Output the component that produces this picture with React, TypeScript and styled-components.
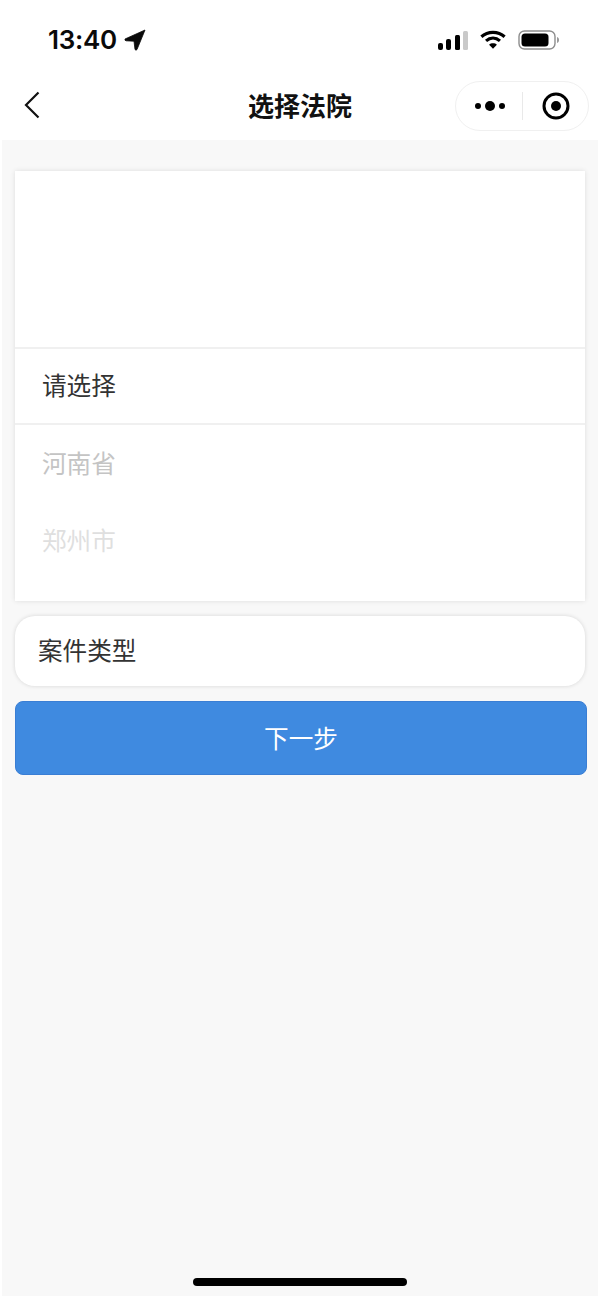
import React from "react";
import styled, { createGlobalStyle } from "styled-components";

const Global = createGlobalStyle`
  html, body { margin: 0; padding: 0; background: #fff; }
  body { font-family: "Noto Sans CJK SC", "Liberation Sans", sans-serif; }
  * { box-sizing: border-box; }
`;

const Page = styled.div`
  width: 600px;
  height: 1298px;
  display: flex;
  flex-direction: column;
  background: #fff;
  overflow: hidden;
`;

const StatusBar = styled.div`
  height: 72px;
  padding: 0 40px 0 48px;
  display: flex;
  align-items: flex-start;
  justify-content: space-between;
`;

const TimeGroup = styled.div`
  display: flex;
  align-items: center;
  gap: 7px;
  height: 30px;
  margin-top: 25px;
`;

const Time = styled.span`
  font-family: Inter, "Liberation Sans", sans-serif;
  font-size: 26px;
  font-weight: 600;
  letter-spacing: -0.3px;
  color: #0a0a0a;
  line-height: 30px;
`;

const StatusIcons = styled.div`
  display: flex;
  align-items: center;
  height: 20px;
  margin-top: 30px;
  gap: 12px;
`;

const NavBar = styled.div`
  height: 68px;
  padding: 0 11px 0 24px;
  display: flex;
  align-items: center;
  justify-content: space-between;
  position: relative;
`;

const NavTitle = styled.h1`
  position: absolute;
  left: 0;
  right: 0;
  top: 15px;
  margin: 0;
  text-align: center;
  font-size: 26px;
  line-height: 36px;
  font-weight: 600;
  color: #111;
`;

const BackButton = styled.div`
  display: flex;
  align-items: center;
  margin-top: -2px;
`;

const Capsule = styled.div`
  width: 134px;
  height: 50px;
  margin-top: -1px;
  border: 1px solid #f0f0f0;
  border-radius: 25px;
  background: #fff;
  display: flex;
  align-items: center;
`;

const CapsuleSide = styled.div`
  flex: 1;
  padding-left: 2px;
  display: flex;
  align-items: center;
  justify-content: center;
`;

const CapsuleDivider = styled.div`
  width: 1px;
  height: 28px;
  background: #e9e9e9;
`;

const Content = styled.main`
  flex: 1;
  margin: 0 2px 2px;
  padding: 31px 13px 0;
  background: #f8f8f8;
  display: flex;
  flex-direction: column;
`;

const PickerCard = styled.section`
  width: 570px;
  height: 430px;
  background: #fff;
  box-shadow: 0 0 5px rgba(0, 0, 0, 0.11);
  display: flex;
  flex-direction: column;
`;

const PickerBlank = styled.div`
  height: 178px;
  border-bottom: 2px solid #f0f0f0;
`;

const PickerRow = styled.div<{ $tone: string; $height: number }>`
  height: ${(p) => p.$height}px;
  padding: 0 0 4px 27px;
  display: flex;
  align-items: center;
  font-size: 24.6px;
  color: ${(p) => p.$tone};
`;

const SelectedRow = styled(PickerRow)`
  border-bottom: 2px solid #f0f0f0;
`;

const TypeField = styled.div`
  width: 570px;
  height: 70px;
  margin-top: 15px;
  padding: 0 0 4px 23px;
  display: flex;
  align-items: center;
  background: #fff;
  border-radius: 20px;
  box-shadow: 0 0 4px rgba(0, 0, 0, 0.14);
  font-size: 24.6px;
  color: #333;
`;

const NextButton = styled.button`
  width: 572px;
  height: 74px;
  margin-top: 15px;
  border: 1px solid #3a7ed4;
  border-radius: 8px;
  background: #3f8ae0;
  color: #fff;
  font-family: inherit;
  font-size: 24.6px;
  padding: 0 0 2px;
`;

const HomeIndicator = styled.div`
  width: 214px;
  height: 8px;
  margin: auto 0 10px 178px;
  background: #000;
  border-radius: 4px;
`;

export default function App() {
  return (
    <Page>
      <Global />
      <StatusBar>
        <TimeGroup>
          <Time>13:40</Time>
          <svg width="22" height="22" viewBox="0 0 22 22">
            <path d="M21 1 L1 10 Q0.5 11.5 2 11.8 L10 12.2 L11 20.5 Q12 21.8 13 20.5 Z" fill="#0a0a0a" stroke="#0a0a0a" strokeWidth="0.8" strokeLinejoin="round" />
          </svg>
        </TimeGroup>
        <StatusIcons>
          <svg width="30" height="19" viewBox="0 0 30 19">
            <rect x="0" y="12" width="5" height="7" rx="2" fill="#000" />
            <rect x="8" y="8" width="5" height="11" rx="2" fill="#000" />
            <rect x="17" y="4" width="5" height="15" rx="1.5" fill="#000" />
            <rect x="25" y="0" width="5" height="19" rx="1.5" fill="#c9c9c9" />
          </svg>
          <svg width="26" height="20" viewBox="0 0 28 20">
            <path d="M1.5 6.5 C8.5 0.2 19.5 0.2 26.5 6.5" fill="none" stroke="#000" strokeWidth="3.4" />
            <path d="M6.5 11 C11 7 17 7 21.5 11" fill="none" stroke="#000" strokeWidth="3.4" />
            <path d="M14 19.5 L9.8 15 C12 13 16 13 18.2 15 Z" fill="#000" />
          </svg>
          <svg width="42" height="20" viewBox="0 0 42 20">
            <rect x="1" y="1" width="36" height="18" rx="5.5" fill="#fff" stroke="#8d8d8d" strokeWidth="1.4" />
            <rect x="3.5" y="3.5" width="27" height="13" rx="3.5" fill="#000" />
            <path d="M39 7 C40.6 7.5 41 8.7 41 10 C41 11.3 40.6 12.5 39 13 Z" fill="#9a9a9a" />
          </svg>
        </StatusIcons>
      </StatusBar>
      <NavBar>
        <BackButton>
          <svg width="16" height="28" viewBox="0 0 16 28">
            <path d="M14.5 1.5 L2 14 L14.5 26.5" fill="none" stroke="#111" strokeWidth="2.2" />
          </svg>
        </BackButton>
        <NavTitle>选择法院</NavTitle>
        <Capsule>
          <CapsuleSide>
            <svg width="30" height="10" viewBox="0 0 30 10">
              <circle cx="3" cy="5" r="3" fill="#000" />
              <circle cx="15" cy="5" r="5" fill="#000" />
              <circle cx="27" cy="5" r="3" fill="#000" />
            </svg>
          </CapsuleSide>
          <CapsuleDivider />
          <CapsuleSide>
            <svg width="28" height="28" viewBox="0 0 28 28">
              <circle cx="14" cy="14" r="12" fill="none" stroke="#000" strokeWidth="3" />
              <circle cx="14" cy="14" r="5" fill="#000" />
            </svg>
          </CapsuleSide>
        </Capsule>
      </NavBar>
      <Content>
        <PickerCard>
          <PickerBlank />
          <SelectedRow $tone="#333" $height={76}>请选择</SelectedRow>
          <PickerRow $tone="#c4c4c4" $height={78}>河南省</PickerRow>
          <PickerRow $tone="#dfdfdf" $height={76}>郑州市</PickerRow>
        </PickerCard>
        <TypeField>案件类型</TypeField>
        <NextButton>下一步</NextButton>
        <HomeIndicator />
      </Content>
    </Page>
  );
}
